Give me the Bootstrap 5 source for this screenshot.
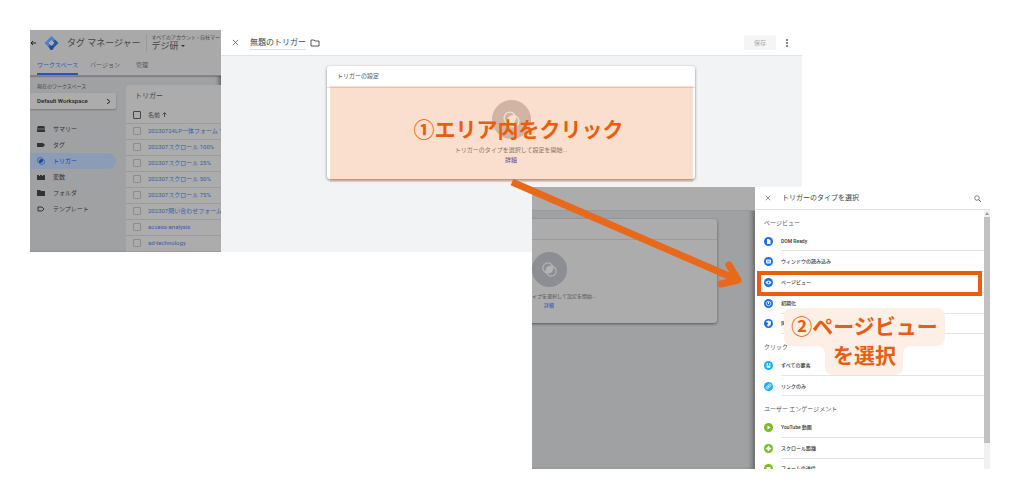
<!DOCTYPE html>
<html lang="ja">
<head>
<meta charset="utf-8">
<meta name="viewport" content="width=device-width, initial-scale=1">
<title>タグ マネージャー</title>
<link href="https://cdn.jsdelivr.net/npm/bootstrap@5.3.0/dist/css/bootstrap.min.css" rel="stylesheet">
<style>
:root{--accent:#e85e0c;--dim:#acacac;--dimbg:#a0a1a3}
body{font-family:Roboto,"Noto Sans CJK JP",sans-serif;font-size:6px;line-height:8px;color:#555;background:#fff}
a{text-decoration:none}
svg{display:block;flex:none}
.stage{display:grid;grid-template-columns:502fr 270fr 188fr;grid-template-rows:157px 65px 217px;padding:30px}
.win-a{grid-area:1/1/3/3;overflow:hidden}
.win-b{grid-area:2/2/4/4;overflow:hidden}
.arrow{grid-area:1/1/4/4;pointer-events:none;width:100%;height:100%;z-index:3}
/* dimmed workspace */
.behind{width:191px;flex:none;overflow:hidden;background:var(--dimbg);color:#444;white-space:nowrap;box-shadow:inset -4px 0 4px -2px #0006}
.topbar{height:46px;background:#a9a9a9;border-bottom:1px solid #858585;box-shadow:0 1px 1px #0003}
.brand-row{height:26px}
.brand-text{font-size:9px;line-height:12px}
.acct{border-left:1px solid #999;padding-left:5px;margin-left:5px}
.tiny{font-size:5px;line-height:6px}
.tabs{padding-left:7px}
.tabs a{color:#555;line-height:18px;height:19px}
.tabs a.on{color:#2458b8;border-bottom:2px solid #2458b8}
.side{width:86px;flex:none;padding-top:8px}
.side .tiny{padding-left:7px}
.ws{display:flex;width:100%;height:16px;border:0;border-radius:0 2px 2px 0;background:#acacac;color:#222;font-weight:500;padding:0 5px 0 7px;align-items:center;justify-content:space-between;box-shadow:0 1px 2px #0004}
.side nav{margin-top:12px}
.side nav a{display:flex;align-items:center;height:16px;gap:8px;padding-left:7px;color:#333;border-radius:0 8px 8px 0}
.side nav a.on{background:#8c9cb6;color:#1b479c}
.list-a{margin:9px 0 0 10px;background:var(--dim);width:95px;flex:none;border-radius:3px 0 0 0}
.list-a h2,.panel h2{font-size:7px;line-height:22px;height:22px;margin:0;font-weight:400;padding-left:9px}
.list-a table{width:100%;table-layout:fixed;border-collapse:collapse}
.list-a th,.list-a td{height:16px;padding:0;border-bottom:1px solid #9b9b9b;font-weight:400;line-height:8px}
.list-a .ck{width:22px;padding-left:7px}
.list-a input{appearance:none;display:block;width:8px;height:8px;border:1px solid #8c8c8c;border-radius:1px;margin:0}
.list-a th input{border-color:#444}
.list-a td a{color:#3d5ca5}
/* editor */
.panel{background:#f1f3f4}
.head{background:#fff;border-bottom:1px solid #e2e3e4}
.plain{border:0;background:none;padding:0;color:#666}
.name{font-size:8px;line-height:12px;border-bottom:1px solid #ddd;color:#444;margin-top:1px}
.save{border:0;border-radius:1px;background:#f5f5f5;color:#aaa;width:32px;height:15px;padding:0}
.setting{background:#fff;border-radius:3px;box-shadow:0 1px 3px #0007}
.setting h2{height:22px;border-bottom:1px solid #ddd;line-height:22px}
.panel .setting h2{font-size:6px;line-height:20px;padding-left:10px;color:#555}
.pick{padding-top:12px;color:#777}
.pick a{color:#3346b8}
.wash{position:absolute;inset:20px 2px -3px 3px;background:#e85e0c33;color:var(--accent);font-size:21px;line-height:30px;font-weight:700;padding:29px 0 0 14px;text-align:center}
.backing{background:var(--dimbg);box-shadow:inset -5px 0 5px -2px #0005}
.backing .head{background:#acacac;border-color:#999}
.backing .setting{background:#acacac;width:336px;flex:none;height:104px;color:#666}
.backing h2{height:21px;border-color:#9b9b9b}
.backing .pick{padding-top:12px;font-size:5px;color:#555}
.backing .pick a{color:#2a4ba6}
.types{width:235px;flex:none;background:#fff;color:#444}
.type-title{font-size:7px;line-height:10px}
.rows{display:grid;grid-auto-rows:8%;overflow:hidden;height:100%;margin:0;padding:0;list-style:none}
.rows li{display:grid;grid-template-columns:17px 1fr;padding-left:9px;min-height:0;position:relative}
.rows li.group{display:block;padding-top:9px;color:#555}
.rows a{display:flex;align-items:center;border-bottom:1px solid #e4e4e4;font-size:5px;font-weight:500;color:#333}
.rows svg{align-self:center}
.rows .chosen::after{content:"";position:absolute;inset:-1px 2px -3px 2px;border:4px solid var(--accent);z-index:1}
.bar{width:6px;background:#f1f1f1;padding-top:7px}
.bar::before{content:"";position:absolute;margin:-5px 0 0 1px;border:2px solid transparent;border-top:0;border-bottom:3px solid #999}
.thumb{height:226px;background:#c1c1c1}
.callout{position:absolute;left:29px;top:121px;width:161px;height:67px;color:var(--accent);font-size:21px;line-height:29px;font-weight:700;text-align:center;padding-top:5px;z-index:2}
.callout svg{position:absolute;inset:0;z-index:-1}
</style>
</head>
<body>
<svg class="d-none">
<symbol id="venn" viewBox="0 0 24 24"><circle cx="9.500" cy="9.500" r="8" fill="none" stroke="currentColor" stroke-width="1.800"/><circle cx="14.500" cy="14.500" r="8" fill="none" stroke="currentColor" stroke-width="1.800"/><path d="M17 7A8 8 0 0 0 7 17 8 8 0 0 0 17 7Z" fill="currentColor"/></symbol>
<symbol id="close" viewBox="0 0 8 8"><path d="M1 1l6 6M7 1L1 7" stroke="currentColor" stroke-width="1"/></symbol>
</svg>
<main class="stage">
<section class="win-a d-flex">
  <div class="behind">
    <header class="topbar">
      <div class="brand-row d-flex align-items-center">
        <svg width="6" height="8" viewBox="0 0 6 8"><path d="M6 4H1M3 2L1 4l2 2" fill="none" stroke="#222"/></svg>
        <svg class="ms-2 me-2" width="15" height="14" viewBox="0 0 14 14"><path d="M7 0l3.500 3.500-7 7L0 7z" fill="#4f80cc"/><path d="M10.500 3.500L14 7l-7 7-3.500-3.500z" fill="#2457a5"/><path d="M7 4l3 3-3 3-3-3z" fill="#a9adb5"/><circle cx="7" cy="12" r="2" fill="#1d4a94"/></svg>
        <span class="brand-text">タグ マネージャー</span>
        <div class="acct"><div class="tiny">すべてのアカウント › 自社マー</div><div class="brand-text">デジ研 <svg class="d-inline-block" width="4" height="4" viewBox="0 0 4 4"><path d="M0 0h4L2 2z" fill="#333"/></svg></div></div>
      </div>
      <nav class="tabs d-flex"><a class="on" href="#">ワークスペース</a><a class="ms-2 ps-1" href="#">バージョン</a><a class="ms-3" href="#">管理</a></nav>
    </header>
    <div class="d-flex">
      <div class="side">
        <div class="tiny pb-1 lh-1">現在のワークスペース</div>
        <button class="ws">Default Workspace <svg width="5" height="7" viewBox="0 0 5 7"><path d="M1 1l3 2.500L1 6" fill="none" stroke="#222"/></svg></button>
        <nav>
          <a href="#"><svg width="8" height="8" viewBox="0 0 8 8"><path d="M1 1h6l1 2v4H0V3z" fill="#333"/><path d="M0 4h8" stroke="#aaa" stroke-width=".6"/></svg>サマリー</a>
          <a href="#"><svg width="8" height="8" viewBox="0 0 8 8"><path d="M0 2h6l2 2-2 2H0z" fill="#333"/></svg>タグ</a>
          <a href="#" class="on"><svg width="8" height="8"><use href="#venn"/></svg>トリガー</a>
          <a href="#"><svg width="8" height="8" viewBox="0 0 8 8"><path d="M0 3V2h2v1h1V2h2v1h1V2h2v5H0z" fill="#333"/></svg>変数</a>
          <a href="#"><svg width="8" height="8" viewBox="0 0 8 8"><path d="M0 1h3l1 1h4v5H0z" fill="#333"/></svg>フォルダ</a>
          <a href="#"><svg width="8" height="8" viewBox="0 0 8 8"><path d="M1 2h4l2 2-2 2H1z" fill="none" stroke="#333"/></svg>テンプレート</a>
        </nav>
      </div>
      <div class="list-a">
        <h2>トリガー</h2>
        <table>
          <thead><tr><th class="ck"><input type="checkbox" aria-label="すべて選択"></th><th>名前 <svg class="d-inline-block align-baseline" width="5" height="5" viewBox="0 0 5 5"><path d="M2.500 5V1M.5 2.500l2-2 2 2" fill="none" stroke="#333" stroke-width=".8"/></svg></th></tr></thead>
          <tbody>
          <tr><td class="ck"><input type="checkbox" aria-label="選択"></td><td><a href="#">20230724LP一体フォーム サ</a></td></tr>
          <tr><td class="ck"><input type="checkbox" aria-label="選択"></td><td><a href="#">202307スクロール 100%</a></td></tr>
          <tr><td class="ck"><input type="checkbox" aria-label="選択"></td><td><a href="#">202307スクロール 25%</a></td></tr>
          <tr><td class="ck"><input type="checkbox" aria-label="選択"></td><td><a href="#">202307スクロール 50%</a></td></tr>
          <tr><td class="ck"><input type="checkbox" aria-label="選択"></td><td><a href="#">202307スクロール 75%</a></td></tr>
          <tr><td class="ck"><input type="checkbox" aria-label="選択"></td><td><a href="#">202307問い合わせフォーム</a></td></tr>
          <tr><td class="ck"><input type="checkbox" aria-label="選択"></td><td><a href="#">access-analysis</a></td></tr>
          <tr><td class="ck"><input type="checkbox" aria-label="選択"></td><td><a href="#">ad-technology</a></td></tr>
          </tbody>
        </table>
      </div>
    </div>
  </div>
  <div class="panel flex-grow-1">
    <header class="head d-flex align-items-center" style="height:26px;padding:0 12px 0 11px">
      <button class="plain me-2" aria-label="閉じる"><svg width="7" height="7"><use href="#close"/></svg></button>
      <span class="name" style="margin-left:3px">無題のトリガー</span>
      <svg class="ms-1" width="10" height="8" viewBox="0 0 10 8"><path d="M1 1h3l1 1h4v5H1z" fill="none" stroke="#555"/></svg>
      <button class="save ms-auto">保存</button>
      <button class="plain ms-2" aria-label="その他"><svg width="6" height="8" viewBox="0 0 6 8"><path d="M2 0h2v2H2zM2 3h2v2H2zM2 6h2v2H2z" fill="#888"/></svg></button>
    </header>
    <div class="setting position-relative" style="margin:10px 107px 0 106px;height:113px">
      <h2>トリガーの設定</h2>
      <div class="pick d-flex flex-column align-items-center">
        <svg width="39" height="39" viewBox="0 0 39 39"><circle cx="19.500" cy="19.500" r="19.500" fill="#cdcacc"/><use href="#venn" x="11" y="11" width="17" height="17" color="#fff"/></svg>
        <div style="margin-top:7px">トリガーのタイプを選択して設定を開始...</div>
        <a class="lh-1" style="margin-top:3px" href="#">詳細</a>
      </div>
      <div class="wash">①エリア内をクリック</div>
    </div>
  </div>
</section>
<section class="win-b d-flex">
  <div class="panel backing flex-grow-1 overflow-hidden">
    <div class="head" style="height:24px"></div>
    <div class="d-flex justify-content-end" style="padding:8px 38px 0 0">
      <div class="setting">
        <h2>&nbsp;</h2>
        <div class="pick d-flex flex-column align-items-center">
          <svg width="35" height="35" viewBox="0 0 39 39"><circle cx="19.500" cy="19.500" r="19.500" fill="#8c8e93"/><use href="#venn" x="11" y="11" width="17" height="17" color="#b4b4b6"/></svg>
          <div style="margin-top:5px">トリガーのタイプを選択して設定を開始...</div>
          <a class="lh-1" style="margin-top:3px" href="#">詳細</a>
        </div>
      </div>
    </div>
  </div>
  <div class="types position-relative d-flex flex-column">
    <header class="head d-flex align-items-center" style="height:23px;padding:0 9px 0 10px">
      <button class="plain" aria-label="閉じる"><svg width="6" height="6"><use href="#close"/></svg></button>
      <span class="type-title ms-2" style="padding-left:3px">トリガーのタイプを選択</span>
      <button class="plain ms-auto" aria-label="検索"><svg width="7" height="7" viewBox="0 0 7 7"><circle cx="3" cy="3" r="2.300" fill="none" stroke="#666" stroke-width=".8"/><path d="M4.600 4.600L7 7" stroke="#666"/></svg></button>
    </header>
    <div class="d-flex flex-grow-1" style="min-height:0">
      <ul class="rows flex-grow-1">
        <li class="group">ページビュー</li>
        <li><svg width="9" height="9" viewBox="0 0 18 18"><circle cx="9" cy="9" r="9" fill="#1a6fe8"/><path d="M6 4h4l3 3v7H6z" fill="#fff"/></svg><a href="#">DOM Ready</a></li>
        <li><svg width="9" height="9" viewBox="0 0 18 18"><circle cx="9" cy="9" r="9" fill="#1a6fe8"/><path d="M5 6h8v6H5z" fill="#8ab6f7" stroke="#fff" stroke-width="2"/></svg><a href="#">ウィンドウの読み込み</a></li>
        <li class="chosen"><svg width="9" height="9" viewBox="0 0 18 18"><circle cx="9" cy="9" r="9" fill="#1a6fe8"/><path d="M3 9q6-8 12 0-6 8-12 0z" fill="#fff"/><circle cx="9" cy="9" r="2" fill="#1a6fe8"/></svg><a href="#">ページビュー</a></li>
        <li><svg width="9" height="9" viewBox="0 0 18 18"><circle cx="9" cy="9" r="9" fill="#1a6fe8"/><circle cx="9" cy="9" r="4.500" fill="none" stroke="#fff" stroke-width="1.500"/><path d="M9 6v4" stroke="#fff" stroke-width="2"/></svg><a href="#">初期化</a></li>
        <li><svg width="9" height="9" viewBox="0 0 18 18"><circle cx="9" cy="9" r="9" fill="#1a6fe8"/><path d="M9 3l5 2v4q0 4-5 6-2-1-3-3l3-3-3-3-2 1V5z" fill="#fff"/></svg><a href="#">同</a></li>
        <li class="group">クリック</li>
        <li><svg width="9" height="9" viewBox="0 0 18 18"><circle cx="9" cy="9" r="9" fill="#12b0f2"/><path d="M5 8V6q0-2 3-2v4zM10 8V4q3 0 3 2v2zM5 9h8v2q0 3-4 3t-4-3z" fill="#fff"/></svg><a href="#">すべての要素</a></li>
        <li><svg width="9" height="9" viewBox="0 0 18 18"><circle cx="9" cy="9" r="9" fill="#12b0f2"/><g transform="rotate(-45 9 9)" fill="none" stroke="#fff" stroke-width="1.500"><rect x="3" y="6.500" width="6" height="5" rx="2.500"/><rect x="9" y="6.500" width="6" height="5" rx="2.500"/><path d="M6 9h6"/></g></svg><a href="#">リンクのみ</a></li>
        <li class="group">ユーザー エンゲージメント</li>
        <li><svg width="9" height="9" viewBox="0 0 18 18"><circle cx="9" cy="9" r="9" fill="#7cba28"/><path d="M7 5l6 4-6 4z" fill="#fff"/></svg><a href="#">YouTube 動画</a></li>
        <li><svg width="9" height="9" viewBox="0 0 18 18"><circle cx="9" cy="9" r="9" fill="#7cba28"/><path d="M9 3l2.500 3.500L15 9l-3.500 2.500L9 15l-2.500-3.500L3 9l3.500-2.500z" fill="#fff"/></svg><a href="#">スクロール距離</a></li>
        <li><svg width="9" height="9" viewBox="0 0 18 18"><circle cx="9" cy="9" r="9" fill="#7cba28"/><path d="M5 6h8v7H5z" fill="#fff"/></svg><a href="#">フォームの送信</a></li>
      </ul>
      <div class="bar"><div class="thumb"></div></div>
    </div>
    <div class="callout"><svg width="161" height="67" viewBox="0 0 161 67"><path d="M9 0h143q9 0 9 9v20q0 9-9 9h-24q-9 0-9 9v11q0 9-9 9H50q-9 0-9-9V47q0-9-9-9H9q-9 0-9-9V9q0-9 9-9z" fill="#fdeee6"/></svg>②ページビュー<br>を選択</div>
  </div>
</section>
<svg class="arrow" viewBox="0 0 960 439" fill="none" stroke="#e8691b" stroke-width="7"><path d="M482 152L708 250"/><path d="M699 235l9 15-17 4" stroke-linecap="round" stroke-linejoin="round"/></svg>
</main>
<script src="https://cdn.jsdelivr.net/npm/bootstrap@5.3.0/dist/js/bootstrap.bundle.min.js"></script>
</body>
</html>
